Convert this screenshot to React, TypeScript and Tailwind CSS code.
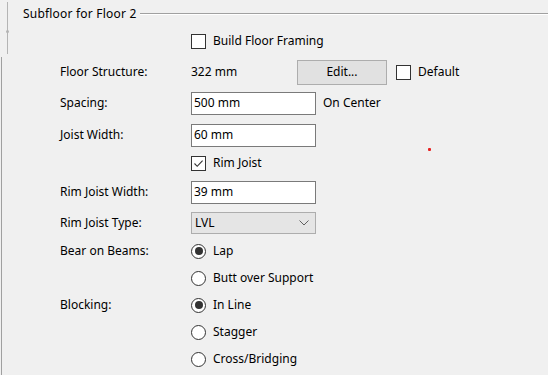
import React from 'react';

function CheckBox({ checked, label }: { checked?: boolean; label: string }) {
  return (
    <div className="flex items-center gap-[7px]">
      <span className="w-[15px] h-[15px] border border-[#333333] bg-white flex items-center justify-center">
        {checked && (
          <svg width="11" height="11" viewBox="0 0 11 11">
            <path d="M1.5 5.5 L4.2 8.3 L9.6 2.6" fill="none" stroke="#333" strokeWidth="1.1" />
          </svg>
        )}
      </span>
      <span>{label}</span>
    </div>
  );
}

function Radio({ checked, label }: { checked?: boolean; label: string }) {
  return (
    <div className="flex items-center gap-[7px]">
      <span className="w-[15px] h-[15px] rounded-full border border-[#333333] bg-white flex items-center justify-center">
        {checked && <span className="w-[8px] h-[8px] rounded-full bg-[#333333]" />}
      </span>
      <span>{label}</span>
    </div>
  );
}

function TextBox({ value }: { value: string }) {
  return (
    <div className="w-[125px] h-[23px] border border-[#7a7a7a] bg-white flex items-center pl-[2px]">
      {value}
    </div>
  );
}

function Row({ h, label, children }: { h: string; label?: string; children?: React.ReactNode }) {
  return (
    <div className={`flex items-center ${h}`}>
      <div className="w-[131px] shrink-0">{label}</div>
      {children}
    </div>
  );
}

export default function App() {
  return (
    <div className="relative w-[548px] h-[375px] overflow-hidden bg-[#f0f0f0] text-[12px] leading-none text-black font-['Segoe_UI','Noto_Sans',sans-serif]">
      {/* group title */}
      <div className="flex items-center h-[27px] pl-[23px]">
        <span className="tracking-[0.2px]">Subfloor for Floor 2</span>
        <div className="flex-1 ml-[4px] flex flex-col">
          <div className="h-px bg-[#a0a0a0]" />
          <div className="h-px bg-white" />
        </div>
      </div>

      {/* collapse handle */}
      <div className="absolute left-[7px] top-[2px] h-[52px] w-px bg-[#b4b4b4]" />
      <div className="absolute left-[6px] top-[30px] w-[3px] h-[3px] rounded-full bg-[#b4b4b4]" />
      {/* group left border */}
      <div className="absolute left-[1px] top-[57px] bottom-0 w-px bg-[#a0a0a0]" />

      {/* red marker */}
      <div className="absolute left-[428px] top-[148px] w-[3px] h-[3px] rounded-[1px] bg-[#e82020]" />

      <div className="pl-[60px] -mt-[1px]">
        <Row h="h-[30px]">
          <CheckBox label="Build Floor Framing" />
        </Row>
        <Row h="h-[32px]" label="Floor Structure:">
          <span className="w-[106px]">322 mm</span>
          <button className="w-[90px] h-[25px] bg-[#e1e1e1] border border-[#adadad] flex items-center justify-center">
            Edit...
          </button>
          <div className="ml-[9px]">
            <CheckBox label="Default" />
          </div>
        </Row>
        <Row h="h-[30px]" label="Spacing:">
          <TextBox value="500 mm" />
          <span className="ml-[7px]">On Center</span>
        </Row>
        <Row h="h-[34px]" label="Joist Width:">
          <TextBox value="60 mm" />
        </Row>
        <Row h="h-[22px]">
          <CheckBox checked label="Rim Joist" />
        </Row>
        <Row h="h-[36px]" label="Rim Joist Width:">
          <TextBox value="39 mm" />
        </Row>
        <Row h="h-[26px]" label="Rim Joist Type:">
          <div className="w-[125px] h-[22px] bg-[#e5e5e5] border border-[#adadad] flex items-center justify-between pl-[3px] pr-[6px]">
            <span>LVL</span>
            <svg width="10" height="6" viewBox="0 0 10 6">
              <path d="M0.5 0.5 L5 5 L9.5 0.5" fill="none" stroke="#606060" strokeWidth="1" />
            </svg>
          </div>
        </Row>
        <Row h="h-[30px]" label="Bear on Beams:">
          <Radio checked label="Lap" />
        </Row>
        <Row h="h-[24px]">
          <Radio label="Butt over Support" />
        </Row>
        <Row h="h-[30px]" label="Blocking:">
          <Radio checked label="In Line" />
        </Row>
        <Row h="h-[24px]">
          <Radio label="Stagger" />
        </Row>
        <Row h="h-[30px]">
          <Radio label="Cross/Bridging" />
        </Row>
      </div>
    </div>
  );
}
